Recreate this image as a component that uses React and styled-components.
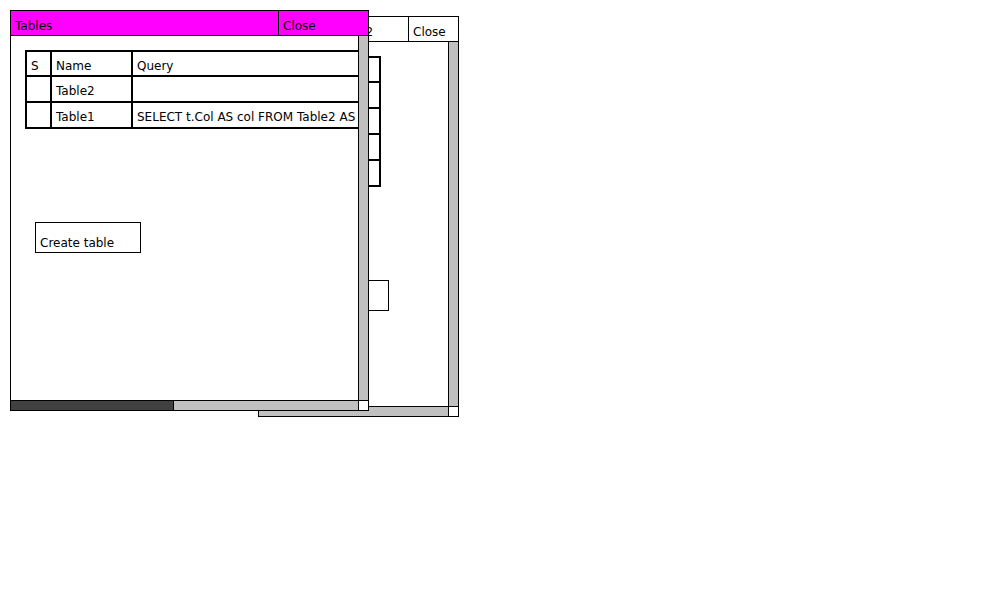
import React from "react";
import styled, { createGlobalStyle } from "styled-components";

const GlobalStyle = createGlobalStyle`
  html, body { margin: 0; padding: 0; background: #ffffff; }
  body {
    font-family: "DejaVu Sans", "Liberation Sans", sans-serif;
    font-size: 12px;
    color: #000000;
  }
`;

const Desktop = styled.div`
  position: relative;
  width: 1000px;
  height: 600px;
  overflow: hidden;
  background: #ffffff;
`;

const Frame = styled.div`
  position: absolute;
  left: ${(p) => p.$x}px;
  top: ${(p) => p.$y}px;
  width: ${(p) => p.$w}px;
  height: ${(p) => p.$h}px;
  box-sizing: border-box;
  border: 1px solid #000;
  background: #fff;
  display: flex;
  flex-direction: column;
`;

const TitleBar = styled.div`
  display: flex;
  flex: 0 0 25px;
  box-sizing: border-box;
  border-bottom: 1px solid #000;
  background: ${(p) => (p.$active ? "#ff00ff" : "#ffffff")};
`;

const Label = styled.div`
  display: flex;
  align-items: flex-end;
  box-sizing: border-box;
  padding: 0 4px 2px 4px;
  line-height: 14px;
  white-space: nowrap;
  overflow: hidden;
`;

const TitleText = styled(Label)`
  flex: 1 1 auto;
  min-width: 0;
`;

const CloseCell = styled(Label)`
  flex: 0 0 ${(p) => p.$w}px;
  border-left: 1px solid #000;
`;

const Body = styled.div`
  flex: 1 1 auto;
  min-height: 0;
  display: grid;
  grid-template-columns: minmax(0, 1fr) 10px;
  grid-template-rows: minmax(0, 1fr) 10px;
`;

const Content = styled.div`
  overflow: hidden;
  padding: 14px;
  box-sizing: border-box;
`;

const VScroll = styled.div`
  border-left: 1px solid #000;
  background: #c0c0c0;
`;

const HScroll = styled.div`
  border-top: 1px solid #000;
  background: #c0c0c0;
  display: flex;
`;

const Thumb = styled.div`
  flex: 0 0 ${(p) => p.$w}px;
  box-sizing: border-box;
  background: #404040;
  border-right: 1px solid #000;
`;

const Corner = styled.div`
  border-left: 1px solid #000;
  border-top: 1px solid #000;
  background: #fff;
`;

const Table = styled.table`
  border-collapse: separate;
  border-spacing: 0;
  border: 1px solid #000;
`;

const Td = styled.td`
  padding: 0;
  border: 1px solid #000;
`;

const CellText = styled(Label)`
  width: ${(p) => p.$w}px;
  height: ${(p) => (p.$head ? 23 : 24)}px;
  padding-bottom: ${(p) => (p.$head ? 2 : 3)}px;
`;

const Button = styled(Label)`
  margin: 93px 0 0 10px;
  width: 106px;
  height: 31px;
  border: 1px solid #000;
  background: #fff;
`;

const COLS_FRONT = [
  { key: "s", w: 23 },
  { key: "name", w: 79 },
  { key: "query", w: 600 },
];

const frontRows = [
  { s: "S", name: "Name", query: "Query" },
  { s: "", name: "Table2", query: "" },
  { s: "", name: "Table1", query: "SELECT t.Col AS col FROM Table2 AS t" },
];

const COLS_BACK = [
  { key: "s", w: 23 },
  { key: "name", w: 79 },
];

const backRows = [
  { s: "S", name: "Name" },
  { s: "", name: "Col" },
  { s: "", name: "Col2" },
  { s: "", name: "Col3" },
  { s: "", name: "Col4" },
];

function Grid({ cols, rows }) {
  return (
    <Table>
      <tbody>
        {rows.map((r, i) => (
          <tr key={i}>
            {cols.map((c) => (
              <Td key={c.key}>
                <CellText $w={c.w} $head={i === 0}>
                  {r[c.key]}
                </CellText>
              </Td>
            ))}
          </tr>
        ))}
      </tbody>
    </Table>
  );
}

function Window({ x, y, w, h, title, closeW, active, thumb, children }) {
  return (
    <Frame $x={x} $y={y} $w={w} $h={h}>
      <TitleBar $active={active}>
        <TitleText>{title}</TitleText>
        <CloseCell $w={closeW}>Close</CloseCell>
      </TitleBar>
      <Body>
        <Content>{children}</Content>
        <VScroll />
        <HScroll>{thumb ? <Thumb $w={thumb} /> : null}</HScroll>
        <Corner />
      </Body>
    </Frame>
  );
}

export default function App() {
  return (
    <>
      <GlobalStyle />
      <Desktop>
        <Window x={258} y={16} w={201} h={401} title="Columns of Table2" closeW={50}>
          <Grid cols={COLS_BACK} rows={backRows} />
          <Button>Add column</Button>
        </Window>
        <Window x={10} y={10} w={359} h={401} title="Tables" closeW={90} active thumb={163}>
          <Grid cols={COLS_FRONT} rows={frontRows} />
          <Button>Create table</Button>
        </Window>
      </Desktop>
    </>
  );
}
